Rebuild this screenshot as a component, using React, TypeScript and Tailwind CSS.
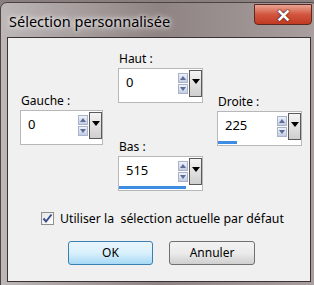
import React from 'react';

function Spinner() {
  return (
    <div className="flex flex-col gap-[1px] mr-[1px]">
      <div className="w-[10px] h-[10px] border border-[#a9b3c9] bg-gradient-to-b from-[#eef2fa] to-[#c3cde2] flex items-center justify-center">
        <div className="w-0 h-0 border-l-[3px] border-r-[3px] border-b-[4px] border-l-transparent border-r-transparent border-b-[#5d6c97]" />
      </div>
      <div className="w-[10px] h-[10px] border border-[#a9b3c9] bg-gradient-to-b from-[#eef2fa] to-[#c3cde2] flex items-center justify-center">
        <div className="w-0 h-0 border-l-[3px] border-r-[3px] border-t-[4px] border-l-transparent border-r-transparent border-t-[#5d6c97]" />
      </div>
    </div>
  );
}

function DropButton() {
  return (
    <div className="w-[13px] h-[27px] border border-[#5a5a5a] bg-gradient-to-b from-[#f4f4f4] to-[#cfcfcf] flex justify-center pt-[8px]">
      <div className="w-0 h-0 border-l-[4px] border-r-[4px] border-t-[5px] border-l-transparent border-r-transparent border-t-black" />
    </div>
  );
}

function SpinField({ value, bar, width }: { value: string; bar: number; width: string }) {
  return (
    <div className={`${width} h-[35px] bg-white border border-[#b8b8b8] flex flex-col`}>
      <div className="flex items-start h-[30px] pt-[1px]">
        <span className="flex-1 pl-[7px] pt-[4px] text-[13px] leading-[16px] text-black">{value}</span>
        <div className="pt-[3px]">
          <Spinner />
        </div>
        <DropButton />
      </div>
      <div className="h-[3px] mt-[-1px]">
        <div className="h-full bg-[#3d8ee3]" style={{ width: bar }} />
      </div>
    </div>
  );
}

function Label({ children }: { children: React.ReactNode }) {
  return <div className="text-[12px] leading-[15px] text-black pl-[1px] mb-[2px]">{children}</div>;
}

export default function App() {
  return (
    <div className="w-[314px] h-[285px] overflow-hidden bg-[#8a7f7f] font-['Noto_Sans',sans-serif]">
      <div className="w-[318px] h-full mt-[2px] rounded-t-[7px] border border-[#4d4343] bg-gradient-to-r from-[#bdb7b7] via-[#8f8383] to-[#a99f9f] flex flex-col">
        {/* Title bar */}
        <div className="h-[34px] flex items-start relative">
          <div className="pl-[8px] pt-[9px] text-[14.5px] leading-[18px] text-black [text-shadow:0_0_8px_#ffffff,0_0_4px_#ffffff]">
            Sélection personnalisée
          </div>
          <div className="ml-auto mr-[5px] mt-[1px] w-[58px] h-[21px] rounded-b-[4px] border border-[#5a2a22] bg-gradient-to-b from-[#e7a393] via-[#d2553f] to-[#c23a22] flex items-center justify-center">
            <span className="text-white text-[18px] font-bold leading-none [text-shadow:0_0_2px_#3a1510,0_0_1px_#3a1510]">✕</span>
          </div>
        </div>

        {/* Client area */}
        <div className="ml-[6px] mr-[6px] h-[245px] border border-[#3b3333] bg-[#f0f0f0] flex flex-col">
          <div className="flex pl-[12px] h-[156px]">
            <div className="w-[83px] pt-[55px]">
              <Label>Gauche :</Label>
              <SpinField value="0" bar={0} width="w-[83px]" />
            </div>
            <div className="w-[85px] ml-[15px] pt-[13px]">
              <Label>Haut :</Label>
              <SpinField value="0" bar={0} width="w-[85px]" />
              <div className="mt-[36px]">
                <Label>Bas :</Label>
                <SpinField value="515" bar={67} width="w-[85px]" />
              </div>
            </div>
            <div className="w-[85px] ml-[14px] pt-[56px]">
              <Label>Droite :</Label>
              <SpinField value="225" bar={19} width="w-[85px]" />
            </div>
          </div>

          <div className="flex items-center pl-[33px] mt-[16px] h-[16px]">
            <div className="w-[13px] h-[13px] border border-[#8e8f8f] bg-gradient-to-br from-[#e6e6e6] to-[#ffffff] flex items-center justify-center">
              <svg width="11" height="11" viewBox="0 0 11 11">
                <path d="M1.5 5.5 L4 8.5 L9.5 1.5" fill="none" stroke="#3b4f8c" strokeWidth="2" />
              </svg>
            </div>
            <span className="ml-[6px] text-[12.3px] leading-[15px] text-black whitespace-pre">Utiliser la  sélection actuelle par défaut</span>
          </div>

          <div className="flex pl-[60px] mt-[15px] gap-[16px]">
            <button className="w-[85px] h-[24px] rounded-[3px] border border-[#3c7fb1] bg-gradient-to-b from-[#eaf6fd] via-[#d9f0fc] to-[#a7d9f5] text-[12px] text-black">
              OK
            </button>
            <button className="w-[86px] h-[24px] rounded-[3px] border border-[#707070] bg-gradient-to-b from-[#f2f2f2] via-[#ebebeb] to-[#cfcfcf] text-[12px] text-black">
              Annuler
            </button>
          </div>
        </div>
      </div>
    </div>
  );
}
